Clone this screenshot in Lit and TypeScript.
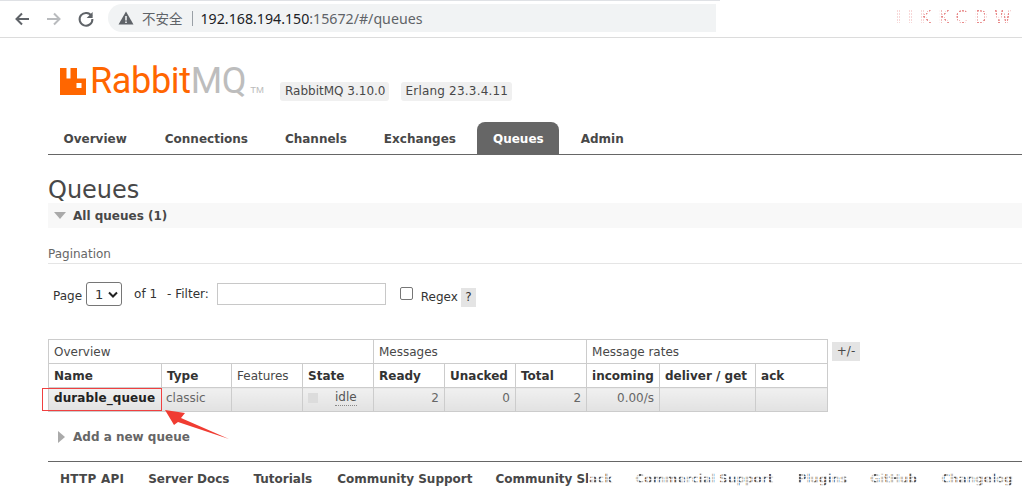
import { LitElement, html, css } from "lit";
import { customElement } from "lit/decorators.js";

@customElement("app-root")
export class AppRoot extends LitElement {
  static styles = css`
    :host { display: block; width: 1022px; height: 493px; overflow: hidden; position: relative; background: #fff;
      font-family: "DejaVu Sans", Verdana, sans-serif; font-size: 12px; color: #484848; }
    * { box-sizing: border-box; }
    .chrome { height: 38px; border-bottom: 1px solid #dcdcdc; display: flex; align-items: center; padding: 0 0 0 13px; position: relative; }
    .chrome::before { content: ""; position: absolute; left: 0; top: 0; width: 720px; height: 1px; background: #dfe1e5; }
    .nav { width: 18px; height: 18px; margin-right: 14px; flex: none; display: block; }
    .omni { margin-left: -1px; width: 608px; height: 28px; background: #f1f3f4; border-radius: 14px 0 0 14px; display: flex; align-items: center; padding-left: 10px;
      font-family: "Noto Sans", "Noto Sans CJK SC", sans-serif; font-size: 14.2px; color: #5f6368; flex: none; margin-top: -1px; }
    .warn { width: 16px; height: 16px; margin-right: 8px; flex: none; }
    .zh { font-family: "Noto Sans CJK SC", sans-serif; font-size: 13.5px; }
    .sep { width: 1px; height: 15px; background: #9aa0a6; margin: 0 8px 0 9px; }
    .host { color: #202124; }
    .wm { position: absolute; left: 896px; top: 7px; font-size: 17px; line-height: 20px; letter-spacing: 7px; font-family: "DejaVu Sans", sans-serif;
      color: transparent; background: radial-gradient(circle at 1px 1px, #e88888 0 1px, transparent 1.1px) 0 0 / 3px 3px; -webkit-background-clip: text; background-clip: text; }
    .page { padding: 0 0 0 48px; }
    .head { display: flex; align-items: flex-end; height: 62px; padding-left: 12px; }
    .logo { display: flex; align-items: flex-end; width: 220px; flex: none; margin-bottom: 5px; }
    .mark { width: 26px; height: 27px; flex: none; margin-right: 4px; }
    .brand { font-family: "Roboto", "Liberation Sans", sans-serif; font-weight: 400; font-size: 36px; line-height: 27px; color: #ff6600; letter-spacing: -.35px; }
    .brand span { color: #bdbdbd; }
    .tm { font-family: "Liberation Sans", sans-serif; font-size: 9.5px; line-height: 10px; color: #bbb; margin: 0 0 0 4px; }
    .ver { background: #f0f0f0; border-radius: 3px; padding: 0 4px 0 5px; height: 19px; line-height: 19px; margin-right: 12px; margin-bottom: -1px; font-size: 12px; color: #484848; white-space: nowrap; }
    .ver.e { padding: 0 4px; letter-spacing: .2px; }
    .tabs { display: flex; margin-top: 22px; height: 33px; border-bottom: 1px solid #666; width: 974px; }
    .tab { padding: 0 15.5px; font-weight: 700; font-size: 12px; line-height: 35px; color: #484848; margin-right: 6px; }
    .tab:first-child { margin-right: 7px; }
    .tab.on { background: #666; color: #fff; border-radius: 8px 8px 0 0; height: 32px; }
    h1 { margin: 23px 0 0; font-weight: 400; font-size: 24px; line-height: 25px; color: #484848; height: 24px; }
    .sec { width: 974px; height: 25px; background: #f8f8f8; display: flex; align-items: center; font-weight: 700; font-size: 12px; margin-top: 1px; padding-left: 6px; }
    .tri { width: 0; height: 0; border-left: 6px solid transparent; border-right: 6px solid transparent; border-top: 7px solid #aaa; margin-right: 7px; }
    .pag { margin-top: 18px; width: 974px; height: 18px; line-height: 17px; border-bottom: 1px solid #e5e5e5; color: #666; font-size: 12px; }
    .filter { display: flex; align-items: center; height: 24px; margin-top: 18px; padding-left: 5px; font-size: 12px; color: #333; }
    .pg { margin-top: 4px; }
    .sel { width: 36px; height: 24px; border: 1px solid #767676; border-radius: 3px; margin-left: 4px; display: flex; align-items: center; padding-left: 8px; font-size: 13px; gap: 5px; color: #333; background: #fff; }
    .sel svg { width: 10px; height: 7px; }
    .of { margin-left: 12px; }
    .flt { margin-left: 10px; }
    .inp { width: 169px; height: 22px; margin-left: 8px; margin-top: -1px; border: 1px solid #c8c8c8; background: #fff; }
    .cb { width: 13px; height: 13px; border: 1px solid #767676; border-radius: 2px; margin-left: 14px; margin-top: -1px; background: #fff; }
    .rx { margin-left: 8px; margin-top: 5px; }
    .q { width: 15px; height: 19px; line-height: 19px; background: #e4e4e4; text-align: center; margin-left: 3px; margin-top: 6px; }
    .tw { display: flex; align-items: flex-start; margin-top: 33px; }
    table { border-collapse: collapse; table-layout: fixed; width: 779px; font-size: 12px; }
    td, th { padding: 0 0 0 5px; height: 24px; font-weight: 400; text-align: left; color: #484848; white-space: nowrap; overflow: visible; border: 1px solid #ccc; }
    .hd th { font-weight: 700; color: #333; }
    .hd th.n { font-weight: 400; color: #484848; }
    td { background: linear-gradient(#f0f0f0, #e2e2e2); padding-bottom: 3px; }
    td.r { text-align: right; padding: 0 5px 3px 0; color: #666; }
    td.nm { font-weight: 700; color: #222; letter-spacing: .1px; }
    td.c { color: #666; padding-left: 4px; }
    .st { display: flex; align-items: center; }
    .dot { width: 10px; height: 10px; background: #dcdcdc; margin-right: 17px; }
    .idle { border-bottom: 1px dotted #888; line-height: 15px; color: #555; }
    .pm { width: 28px; height: 19px; line-height: 19px; background: #e4e4e4; text-align: center; margin: 3px 0 0 4px; }
    .add { display: flex; align-items: center; height: 20px; margin-top: 15px; padding-left: 10px; font-weight: 700; color: #666; font-size: 12px; }
    .rtri { width: 0; height: 0; border-top: 6px solid transparent; border-bottom: 6px solid transparent; border-left: 7px solid #aaa; margin-right: 8px; }
    .foot { margin-top: 14px; width: 974px; border-top: 1px solid #666; display: flex; padding: 10px 0 0 12px; font-weight: 700; font-size: 12px; white-space: nowrap; line-height: 15px; color: #484848; gap: 24px; position: relative; }
    .api { letter-spacing: .25px; }
    .m1 { margin-left: 1px; }
    .mn { margin-left: -1px; }
    .noise { position: absolute; left: 540px; top: 6px; width: 434px; height: 24px;
      background:
        repeating-linear-gradient(0deg, rgba(255,255,255,.7) 0 1px, rgba(255,255,255,0) 1px 3px),
        repeating-linear-gradient(90deg, rgba(255,255,255,.85) 0 1px, rgba(255,255,255,.1) 1px 3px, rgba(255,255,255,.65) 3px 5px); }
    .hl { position: absolute; left: 42px; top: 388px; width: 120px; height: 23px; border: 1px solid #f04040; }
    .arrow { position: absolute; left: 155px; top: 400px; width: 80px; height: 45px; }
  `;

  render() {
    return html`
      <div class="chrome">
        <svg class="nav" viewBox="0 0 18 18"><path d="M16 9H4M9 3.5 3.5 9 9 14.5" fill="none" stroke="#5f6368" stroke-width="2"/></svg>
        <svg class="nav" viewBox="0 0 18 18"><path d="M2 9h12M9 3.5 14.5 9 9 14.5" fill="none" stroke="#b9bbbe" stroke-width="2"/></svg>
        <svg class="nav" viewBox="0 0 18 18"><path d="M14.6 6.2A6.4 6.4 0 1 0 15.4 9" fill="none" stroke="#5f6368" stroke-width="2"/><path d="M15.6 2v6h-6z" fill="#5f6368"/></svg>
        <div class="omni">
          <svg class="warn" viewBox="0 0 16 16"><path d="M8 1.5 15.5 14.5H.5z" fill="#5f6368"/><path d="M7.2 6h1.6v4.5H7.2zM7.2 11.4h1.6V13H7.2z" fill="#f1f3f4"/></svg>
          <span class="zh">不安全</span><span class="sep"></span><span class="host">192.168.194.150</span><span>:15672/#/queues</span>
        </div>
        <span class="wm">IIKKCDW</span>
      </div>
      <div class="page">
        <div class="head">
          <div class="logo">
            <svg class="mark" viewBox="0 0 26 27"><path d="M0 0h6.5v10.5h4V0H17v10.5h9V27H0z" fill="#ff6600"/><rect x="16.5" y="15" width="5" height="5" fill="#fff"/></svg>
            <span class="brand">Rabbit<span>MQ</span></span><span class="tm">TM</span>
          </div>
          <span class="ver">RabbitMQ 3.10.0</span><span class="ver e">Erlang 23.3.4.11</span>
        </div>
        <nav class="tabs">
          <span class="tab">Overview</span><span class="tab">Connections</span><span class="tab">Channels</span><span class="tab">Exchanges</span><span class="tab on">Queues</span><span class="tab">Admin</span>
        </nav>
        <h1>Queues</h1>
        <div class="sec"><span class="tri"></span>All queues (1)</div>
        <div class="pag">Pagination</div>
        <div class="filter">
          <span class="pg">Page</span>
          <span class="sel">1<svg viewBox="0 0 10 7"><path d="M1 1.5 5 5.5 9 1.5" fill="none" stroke="#222" stroke-width="2"/></svg></span>
          <span class="of">of 1</span><span class="flt">- Filter:</span><span class="inp"></span>
          <span class="cb"></span><span class="rx">Regex</span><span class="q">?</span>
        </div>
        <div class="tw">
          <table>
            <colgroup>
              <col style="width:113px"><col style="width:70px"><col style="width:71px"><col style="width:71px"><col style="width:71px"><col style="width:71px"><col style="width:71px"><col style="width:73px"><col style="width:96px"><col style="width:72px">
            </colgroup>
            <tr class="hd"><th class="n" colspan="4">Overview</th><th class="n" colspan="3">Messages</th><th class="n" colspan="3">Message rates</th></tr>
            <tr class="hd"><th>Name</th><th>Type</th><th class="n">Features</th><th>State</th><th>Ready</th><th>Unacked</th><th>Total</th><th>incoming</th><th>deliver / get</th><th>ack</th></tr>
            <tr><td class="nm">durable_queue</td><td class="c">classic</td><td></td><td><div class="st"><span class="dot"></span><span class="idle">idle</span></div></td><td class="r">2</td><td class="r">0</td><td class="r">2</td><td class="r">0.00/s</td><td></td><td></td></tr>
          </table>
          <span class="pm">+/-</span>
        </div>
        <div class="add"><span class="rtri"></span>Add a new queue</div>
        <footer class="foot">
          <span class="api">HTTP API</span><span>Server Docs</span><span>Tutorials</span><span class="m1">Community Support</span><span class="mn">Community Slack</span><span class="mn">Commercial Support</span><span>Plugins</span><span class="mn">GitHub</span><span>Changelog</span>
          <span class="noise"></span>
        </footer>
      </div>
      <div class="hl"></div>
      <svg class="arrow" viewBox="0 0 80 45"><path d="M10 10 30 13 26 18 74 39 23 22 19 25z" fill="#f03c32"/></svg>
    `;
  }
}
